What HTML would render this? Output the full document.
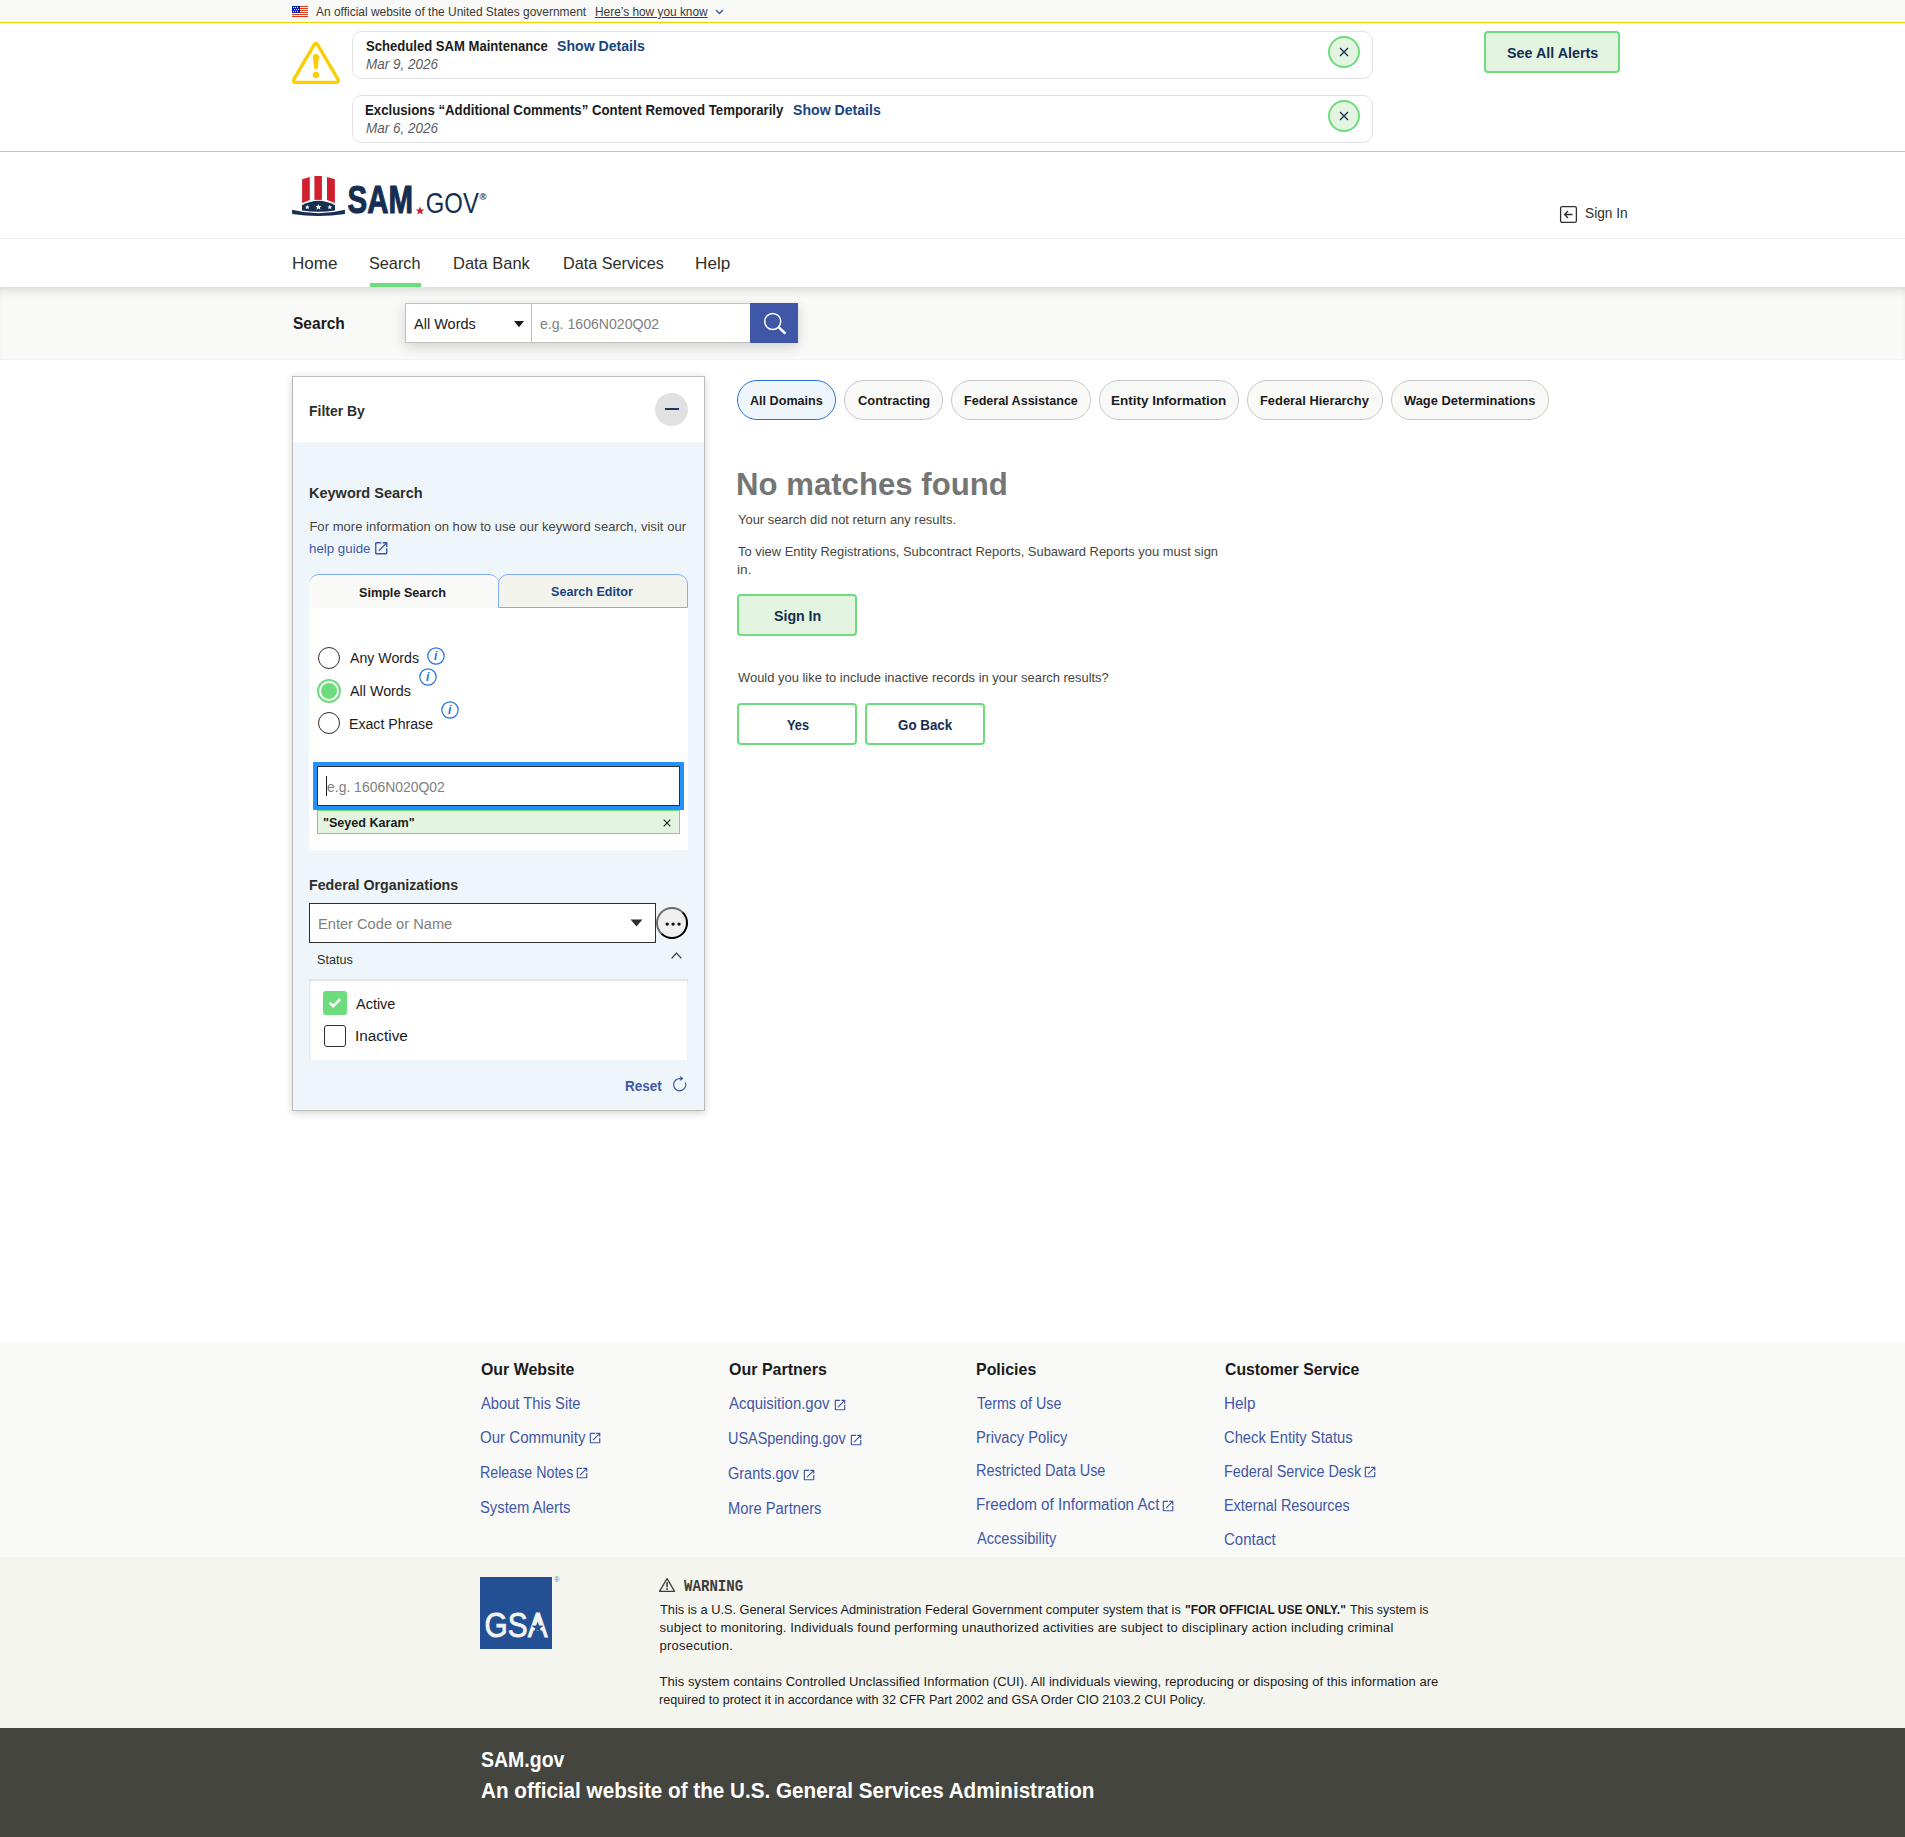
<!DOCTYPE html>
<html lang="en"><head><meta charset="utf-8"><title>SAM.gov | Search</title>
<style>
html,body{margin:0;padding:0;background:#fff;}
body{width:1905px;height:1837px;overflow:hidden;font-family:"Liberation Sans",sans-serif;color:#1b1b1b;}
#page{position:relative;width:1905px;height:1837px;overflow:hidden;}
.a{position:absolute;box-sizing:border-box;}
.t{position:absolute;white-space:pre;line-height:1;transform-origin:0 0;}
svg{position:absolute;overflow:visible;}
.pl{top:380px;height:40px;border:1px solid #c9c9c9;border-radius:20px;background:#f9f9f7;}
.btn{width:120px;height:42px;border:2px solid #6cdc7c;border-radius:4px;background:#fff;}
.ex{width:11.5px;height:11.5px;}

</style></head>
<body>
<div id="page">
<!-- gov banner -->
<div class="a" style="left:0;top:0;width:1905px;height:22px;background:#f9f9f7"></div>
<svg style="left:292px;top:6px" width="16" height="11" viewBox="0 0 16 11" shape-rendering="crispEdges"><rect width="16" height="11" fill="#fff"/><g fill="#dc3a1b"><rect y="0" width="16" height="1"/><rect y="2" width="16" height="1"/><rect y="4" width="16" height="1"/><rect y="6" width="16" height="1"/><rect y="8" width="16" height="1"/><rect y="10" width="16" height="1"/></g><rect width="8" height="7" fill="#0a1fae"/><g fill="#fff"><rect x="1" y="1" width="1" height="1"/><rect x="3" y="1" width="1" height="1"/><rect x="5" y="1" width="1" height="1"/><rect x="2" y="3" width="1" height="1"/><rect x="4" y="3" width="1" height="1"/><rect x="6" y="3" width="1" height="1"/><rect x="1" y="5" width="1" height="1"/><rect x="3" y="5" width="1" height="1"/><rect x="5" y="5" width="1" height="1"/></g></svg>
<svg style="left:715px;top:9px" width="9" height="6" viewBox="0 0 9 6"><path d="M1 1l3.5 3.5L8 1" fill="none" stroke="#3f57a6" stroke-width="1.4"/></svg>
<div class="a" style="left:0;top:22px;width:1905px;height:1px;background:#face00"></div>
<div class="a" style="left:0;top:151px;width:1905px;height:1px;background:#face00"></div>
<!-- alerts -->
<svg style="left:291px;top:41px" width="50" height="44" viewBox="0 0 50 44"><path d="M23.35 3.34A1.80 1.80 0 0 1 26.45 3.34L47.11 38.64A1.80 1.80 0 0 1 45.56 41.35L4.24 41.35A1.80 1.80 0 0 1 2.69 38.64Z" fill="none" stroke="#face00" stroke-width="3.3"/><path d="M21.75 16.1A3.15 3.15 0 0 1 28.05 16.1L26.7 26.4A1.8 1.8 0 0 1 23.1 26.4Z" fill="#face00"/><circle cx="24.9" cy="33.9" r="3.15" fill="#face00"/></svg>
<div class="a" style="left:352px;top:31px;width:1021px;height:48px;border:1px solid #dfe1e2;border-radius:10px;background:#fff"></div>
<div class="a" style="left:352px;top:95px;width:1021px;height:48px;border:1px solid #dfe1e2;border-radius:10px;background:#fff"></div>
<div class="a" style="left:1328px;top:36px;width:32px;height:32px;border:2px solid #6cdc7c;border-radius:50%;background:#e3f5e1"></div>
<div class="a" style="left:1328px;top:100px;width:32px;height:32px;border:2px solid #6cdc7c;border-radius:50%;background:#e3f5e1"></div>
<svg style="left:1339px;top:47px" width="10" height="10" viewBox="0 0 10 10"><path d="M1 1l8 8M9 1l-8 8" stroke="#162e51" stroke-width="1.3"/></svg>
<svg style="left:1339px;top:111px" width="10" height="10" viewBox="0 0 10 10"><path d="M1 1l8 8M9 1l-8 8" stroke="#162e51" stroke-width="1.3"/></svg>
<div class="a" style="left:1484px;top:31px;width:136px;height:42px;border:2px solid #6cdc7c;border-radius:4px;background:#e3f5e1"></div>
<!-- header -->
<svg style="left:292px;top:174px" width="200" height="44" viewBox="292 174 200 44">
<g fill="#d0202e"><path d="M302.1 179.3L309.8 176.9V200.1L302.1 203Z"/><path d="M314.4 176H321.9V199.9H314.4Z"/><path d="M327 176.9L334.9 179.3V203L327 200.1Z"/></g>
<path d="M302 210.5V205.3Q318.5 196.3 335 205.3V210.5Q318.5 212.9 302 210.5Z" fill="#162e51"/>
<path d="M292.1 209.8Q318.5 216.8 344.9 209.8V214Q318.5 217.9 292.1 214Z" fill="#162e51"/>
<g fill="#fff"><path d="M0 -2.2 L.65 -.7 2.1 -.7 .95 .3 1.35 1.8 0 .9 -1.35 1.8 -.95 .3 -2.1 -.7 -.65 -.7Z" transform="translate(307.3 207.2) scale(1.15)"/><path d="M0 -2.2 L.65 -.7 2.1 -.7 .95 .3 1.35 1.8 0 .9 -1.35 1.8 -.95 .3 -2.1 -.7 -.65 -.7Z" transform="translate(318.4 207.1) scale(1.45)"/><path d="M0 -2.2 L.65 -.7 2.1 -.7 .95 .3 1.35 1.8 0 .9 -1.35 1.8 -.95 .3 -2.1 -.7 -.65 -.7Z" transform="translate(329.8 207.2) scale(1.15)"/></g>
<text x="347.6" y="212.7" font-family="Liberation Sans, sans-serif" font-weight="700" font-size="38" fill="#162e51" stroke="#162e51" stroke-width="1.1" stroke-linejoin="round" textLength="65.4" lengthAdjust="spacingAndGlyphs">SAM</text>
<path d="M0 -4.4 L1.3 -1.4 4.2 -1.4 1.9 .6 2.7 3.6 0 1.8 -2.7 3.6 -1.9 .6 -4.2 -1.4 -1.3 -1.4Z" transform="translate(420 211)" fill="#d0202e"/>
<text x="425.8" y="212.7" font-family="Liberation Sans, sans-serif" font-size="29" fill="#162e51" textLength="53" lengthAdjust="spacingAndGlyphs">GOV</text>
<text x="479.6" y="200.3" font-family="Liberation Sans, sans-serif" font-weight="700" font-size="9.5" fill="#162e51">®</text>
</svg>
<svg style="left:1559px;top:205px" width="19" height="19" viewBox="0 0 19 19"><rect x="1.6" y="1.6" width="15.8" height="15.8" rx="1.6" fill="none" stroke="#2e2e2a" stroke-width="1.3"/><path d="M13.5 9.5H5.8M9 6L5.6 9.5 9 13" fill="none" stroke="#2e2e2a" stroke-width="1.3"/></svg>
<div class="a" style="left:0;top:238px;width:1905px;height:1px;background:#f0f0ec"></div>
<!-- search band -->
<div class="a" style="left:0;top:287px;width:1905px;height:73px;background:#f9f9f7;box-shadow:inset 0 7px 8px -4px rgba(0,0,0,.14);border-bottom:1px solid #f3f3ef"></div>
<div class="a" style="left:370px;top:283px;width:51px;height:4px;background:#6cdc7c"></div>
<div class="a" style="left:405px;top:303px;width:393px;height:40px;box-shadow:0 4px 12px rgba(0,0,0,.16);background:#fff"></div>
<div class="a" style="left:405px;top:303px;width:127px;height:40px;border:1px solid #c2c2be;background:#fff"></div>
<div class="a" style="left:531px;top:303px;width:220px;height:40px;border:1px solid #c2c2be;background:#fff"></div>
<svg style="left:513px;top:320px" width="12" height="8" viewBox="0 0 12 8"><path d="M1 1h10L6 7.2Z" fill="#1b1b1b"/></svg>
<div class="a" style="left:750px;top:303px;width:48px;height:40px;background:#3f57a6"></div>
<svg style="left:762px;top:311px" width="24" height="24" viewBox="0 0 24 24"><circle cx="10.7" cy="10.5" r="8" fill="none" stroke="#fff" stroke-width="1.5"/><path d="M16.8 16.4L22.8 22" stroke="#fff" stroke-width="2.4" stroke-linecap="round"/></svg>
<!-- filter panel -->
<div class="a" style="left:292px;top:376px;width:413px;height:735px;border:1px solid #bbbbb8;background:#eff6fb;box-shadow:0 2px 8px rgba(0,0,0,.18)"></div>
<div class="a" style="left:293px;top:377px;width:411px;height:65px;background:#fff"></div>
<div class="a" style="left:655px;top:393px;width:33px;height:33px;border-radius:50%;background:#e1e1e1"></div>
<div class="a" style="left:665px;top:408.4px;width:14px;height:1.4px;background:#1a3a6e"></div>
<!-- tabs -->
<div class="a" style="left:309px;top:607px;width:379px;height:243px;background:#fff"></div>
<div class="a" style="left:309px;top:574px;width:190px;height:34px;background:#f9f9f7;border-top:1px solid #81aefc;border-radius:10px 10px 0 0"></div>
<div class="a" style="left:498px;top:574px;width:190px;height:34px;background:#f3f3ee;border:1px solid #81aefc;border-radius:10px 10px 0 0"></div>
<!-- radios -->
<div class="a" style="left:318px;top:647px;width:22px;height:22px;border:1.6px solid #2e2e2a;border-radius:50%;background:#fff"></div>
<div class="a" style="left:317px;top:679px;width:24px;height:24px;border:2px solid #6cdc7c;border-radius:50%;background:#fff"></div>
<div class="a" style="left:321px;top:683px;width:16px;height:16px;border-radius:50%;background:#6cdc7c"></div>
<div class="a" style="left:318px;top:712px;width:22px;height:22px;border:1.6px solid #2e2e2a;border-radius:50%;background:#fff"></div>
<!-- info icons -->
<svg style="left:427px;top:647px" width="18" height="18" viewBox="0 0 18 18"><circle cx="9" cy="9" r="8.2" fill="none" stroke="#2672de" stroke-width="1.2"/><text x="8.6" y="13.4" text-anchor="middle" font-family="Liberation Sans, sans-serif" font-style="italic" font-weight="700" font-size="12" fill="#2672de">i</text></svg>
<svg style="left:419px;top:668px" width="18" height="18" viewBox="0 0 18 18"><circle cx="9" cy="9" r="8.2" fill="none" stroke="#2672de" stroke-width="1.2"/><text x="8.6" y="13.4" text-anchor="middle" font-family="Liberation Sans, sans-serif" font-style="italic" font-weight="700" font-size="12" fill="#2672de">i</text></svg>
<svg style="left:441px;top:701px" width="18" height="18" viewBox="0 0 18 18"><circle cx="9" cy="9" r="8.2" fill="none" stroke="#2672de" stroke-width="1.2"/><text x="8.6" y="13.4" text-anchor="middle" font-family="Liberation Sans, sans-serif" font-style="italic" font-weight="700" font-size="12" fill="#2672de">i</text></svg>
<!-- keyword input -->
<div class="a" style="left:313px;top:762px;width:371px;height:48px;background:#2491ff"></div>
<div class="a" style="left:317px;top:766px;width:363px;height:40px;border:1px solid #2e2e2a;background:#fff"></div>
<div class="a" style="left:326px;top:776px;width:1px;height:20px;background:#1b1b1b"></div>
<div class="a" style="left:317px;top:810px;width:363px;height:24px;border:1px solid #6cdc7c;background:#e3f5e1"></div>
<svg style="left:663px;top:819px" width="8" height="8" viewBox="0 0 8 8"><path d="M.7 .7l6.6 6.6M7.3 .7l-6.6 6.6" stroke="#1b1b1b" stroke-width="1.1"/></svg>
<!-- federal org -->
<div class="a" style="left:309px;top:903px;width:347px;height:40px;border:1px solid #2e2e2a;background:#fff"></div>
<svg style="left:629.5px;top:919px" width="13" height="8" viewBox="0 0 13 8"><path d="M.6 .4h11.8L6.5 7.6Z" fill="#2e2e2a"/></svg>
<div class="a" style="left:656px;top:907px;width:32px;height:32px;border:2px solid #000;border-top-color:#6a6a6a;border-left-color:#6a6a6a;border-radius:50%;background:#efefef"></div>
<svg style="left:664px;top:921px" width="18" height="6" viewBox="0 0 18 6"><circle cx="3.2" cy="3.1" r="1.7" fill="#111"/><circle cx="9.1" cy="3.1" r="1.7" fill="#111"/><circle cx="15" cy="3.1" r="1.7" fill="#111"/></svg>
<svg style="left:671px;top:952px" width="11" height="7" viewBox="0 0 11 7"><path d="M.6 6.3L5.5 1.2 10.4 6.3" fill="none" stroke="#2e2e2a" stroke-width="1.2"/></svg>
<!-- status box -->
<div class="a" style="left:309px;top:979px;width:379px;height:81px;background:#fff;box-shadow:inset 1px 2px 2px rgba(0,0,0,.12), inset -1px 0 1px rgba(0,0,0,.06)"></div>
<div class="a" style="left:323px;top:991px;width:24px;height:24px;border-radius:3px;background:#6cdc7c"></div>
<svg style="left:328px;top:997px" width="14" height="12" viewBox="0 0 14 12"><path d="M1.6 5.6L5.2 9.2 12.2 2.2" fill="none" stroke="#fff" stroke-width="2.6"/></svg>
<div class="a" style="left:324px;top:1025px;width:22px;height:22px;border:1.6px solid #2e2e2a;border-radius:3px;background:#fff"></div>
<svg style="left:670px;top:1074px" width="20" height="20" viewBox="670 1074 20 20"><path d="M680.76 1078.69A6.1 6.1 0 1 0 685.36 1082.41" fill="none" stroke="#3f57a6" stroke-width="1.15"/><path d="M680.1 1076L683.4 1078.5 680.4 1081Z" fill="#3f57a6"/></svg>
<!-- pills -->
<div class="a" style="left:737px;top:380px;width:99px;height:40px;border:1px solid #2672de;border-radius:20px;background:#eff6fb"></div>
<div class="a pl" style="left:844px;width:99px"></div>
<div class="a pl" style="left:951px;width:140px"></div>
<div class="a pl" style="left:1099px;width:140px"></div>
<div class="a pl" style="left:1247px;width:136px"></div>
<div class="a pl" style="left:1391px;width:158px"></div>
<!-- buttons -->
<div class="a btn" style="left:737px;top:594px;background:#e3f5e1"></div>
<div class="a btn" style="left:737px;top:703px"></div>
<div class="a btn" style="left:865px;top:703px"></div>
<!-- footer -->
<div class="a" style="left:0;top:1343px;width:1905px;height:214px;background:#f9f9f7"></div>
<div class="a" style="left:0;top:1557px;width:1905px;height:171px;background:#f5f5f0"></div>
<div class="a" style="left:0;top:1728px;width:1905px;height:109px;background:#454540"></div>
<svg width="0" height="0" style="left:0;top:0"><defs><path id="exi" fill="#3f57a6" d="M19 19H5V5h7V3H5c-1.11 0-2 .9-2 2v14c0 1.1.89 2 2 2h14c1.1 0 2-.9 2-2v-7h-2v7zM14 3v2h3.59l-9.830 9.830 1.410 1.410L19 6.410V10h2V3h-7z"/></defs></svg>
<svg class="a" style="left:372.5px;top:540.2px" width="16.5" height="16.5" viewBox="0 0 24 24"><use href="#exi"/></svg>
<svg class="a" style="left:588.4px;top:1431.2px" width="14.1" height="14.1" viewBox="0 0 24 24"><use href="#exi"/></svg>
<svg class="a" style="left:575.0px;top:1466.2px" width="14.1" height="14.1" viewBox="0 0 24 24"><use href="#exi"/></svg>
<svg class="a" style="left:832.5px;top:1397.8px" width="14.1" height="14.1" viewBox="0 0 24 24"><use href="#exi"/></svg>
<svg class="a" style="left:848.9px;top:1432.8px" width="14.1" height="14.1" viewBox="0 0 24 24"><use href="#exi"/></svg>
<svg class="a" style="left:801.6px;top:1467.8px" width="14.1" height="14.1" viewBox="0 0 24 24"><use href="#exi"/></svg>
<svg class="a" style="left:1161.2px;top:1498.8px" width="14.1" height="14.1" viewBox="0 0 24 24"><use href="#exi"/></svg>
<svg class="a" style="left:1363.2px;top:1465.4px" width="14.1" height="14.1" viewBox="0 0 24 24"><use href="#exi"/></svg>
<!-- GSA -->
<div class="a" style="left:480px;top:1577px;width:72px;height:72px;background:#235094"></div>
<svg style="left:480px;top:1577px" width="84" height="72" viewBox="480 1577 84 72"><text x="484.6" y="1637" font-family="Liberation Sans, sans-serif" font-size="35" fill="#f5f5f0" stroke="#f5f5f0" stroke-width=".8" textLength="63" lengthAdjust="spacingAndGlyphs">GSA</text><path d="M537.7 1615.5L533 1629.5H542.4Z" fill="#f5f5f0"/><path d="M537.6 1621.4L539.1 1625.6L543.5 1625.7L540.0 1628.4L541.2 1632.6L537.6 1630.1L534.0 1632.6L535.2 1628.4L531.7 1625.7L536.1 1625.6Z" fill="#235094"/><text x="554.3" y="1582.3" font-family="Liberation Sans, sans-serif" font-size="7" fill="#5a78ad">®</text></svg>
<svg style="left:657px;top:1576px" width="20" height="18" viewBox="657 1576 20 18"><path d="M667.05 1578.7L674.6 1591.3H659.5Z" fill="none" stroke="#3d3d3a" stroke-width="1.3" stroke-linejoin="round"/><path d="M667.05 1582.3V1587.2" stroke="#3d3d3a" stroke-width="1.6"/><circle cx="667.05" cy="1589" r=".95" fill="#3d3d3a"/></svg>

<span class="t" style="left:316.00px;top:5.00px;font-size:13px;transform:scaleX(0.9194);color:#3a3a36;">An official website of the United States government</span>
<span class="t" style="left:595.00px;top:5.00px;font-size:13px;transform:scaleX(0.9131);color:#3a3a36;text-decoration:underline;text-underline-offset:1px;">Here’s how you know</span>
<span class="t" style="left:366.40px;top:37.70px;font-size:15px;transform:scaleX(0.8725);font-weight:700;">Scheduled SAM Maintenance</span>
<span class="t" style="left:557.40px;top:37.70px;font-size:15px;transform:scaleX(0.9405);font-weight:700;color:#1a4480;">Show Details</span>
<span class="t" style="left:366.40px;top:55.90px;font-size:15px;transform:scaleX(0.8996);color:#5c5c5c;font-style:italic;">Mar 9, 2026</span>
<span class="t" style="left:365.40px;top:102.30px;font-size:15px;transform:scaleX(0.8812);font-weight:700;">Exclusions “Additional Comments” Content Removed Temporarily</span>
<span class="t" style="left:792.60px;top:102.30px;font-size:15px;transform:scaleX(0.9405);font-weight:700;color:#1a4480;">Show Details</span>
<span class="t" style="left:366.40px;top:119.90px;font-size:15px;transform:scaleX(0.8996);color:#5c5c5c;font-style:italic;">Mar 6, 2026</span>
<span class="t" style="left:1506.60px;top:44.90px;font-size:15px;transform:scaleX(0.9540);font-weight:700;color:#162e51;">See All Alerts</span>
<span class="t" style="left:1585.00px;top:205.00px;font-size:15px;transform:scaleX(0.9142);color:#2e2e2a;">Sign In</span>
<span class="t" style="left:291.60px;top:255.21px;font-size:17px;transform:scaleX(1.0062);color:#2e2e2a;">Home</span>
<span class="t" style="left:369.00px;top:255.21px;font-size:17px;transform:scaleX(0.9552);color:#2e2e2a;">Search</span>
<span class="t" style="left:453.00px;top:255.21px;font-size:17px;transform:scaleX(0.9678);color:#2e2e2a;">Data Bank</span>
<span class="t" style="left:563.00px;top:255.21px;font-size:17px;transform:scaleX(0.9527);color:#2e2e2a;">Data Services</span>
<span class="t" style="left:695.00px;top:255.21px;font-size:17px;transform:scaleX(1.0092);color:#2e2e2a;">Help</span>
<span class="t" style="left:292.60px;top:315.01px;font-size:17px;transform:scaleX(0.9137);font-weight:700;">Search</span>
<span class="t" style="left:414.00px;top:316.28px;font-size:15.5px;transform:scaleX(0.9358);">All Words</span>
<span class="t" style="left:540.00px;top:316.28px;font-size:15.5px;transform:scaleX(0.9100);color:#808080;">e.g. 1606N020Q02</span>
<span class="t" style="left:309.40px;top:403.30px;font-size:15px;transform:scaleX(0.9302);font-weight:700;color:#2e2e2a;">Filter By</span>
<span class="t" style="left:309.40px;top:485.30px;font-size:15px;transform:scaleX(0.9666);font-weight:700;color:#2e2e2a;">Keyword Search</span>
<span class="t" style="left:309.40px;top:520.00px;font-size:13px;letter-spacing:0.037px;color:#454540;">For more information on how to use our keyword search, visit our</span>
<span class="t" style="left:309.40px;top:542.00px;font-size:13px;transform:scaleX(1.0239);color:#3f57a6;">help guide</span>
<span class="t" style="left:359.00px;top:585.70px;font-size:13px;transform:scaleX(0.9713);font-weight:700;">Simple Search</span>
<span class="t" style="left:551.00px;top:585.00px;font-size:13px;transform:scaleX(0.9678);font-weight:700;color:#1a4480;">Search Editor</span>
<span class="t" style="left:350.30px;top:649.58px;font-size:15.5px;transform:scaleX(0.9135);">Any Words</span>
<span class="t" style="left:350.30px;top:682.58px;font-size:15.5px;transform:scaleX(0.9236);">All Words</span>
<span class="t" style="left:349.30px;top:715.58px;font-size:15.5px;transform:scaleX(0.9113);">Exact Phrase</span>
<span class="t" style="left:326.50px;top:779.18px;font-size:15.5px;transform:scaleX(0.8993);color:#808080;">e.g. 1606N020Q02</span>
<span class="t" style="left:322.70px;top:815.70px;font-size:13px;transform:scaleX(0.9675);font-weight:700;">"Seyed Karam"</span>
<span class="t" style="left:309.40px;top:877.30px;font-size:15px;transform:scaleX(0.9471);font-weight:700;color:#2e2e2a;">Federal Organizations</span>
<span class="t" style="left:318.30px;top:915.58px;font-size:15.5px;transform:scaleX(0.9442);color:#808080;">Enter Code or Name</span>
<span class="t" style="left:316.70px;top:954.12px;font-size:12.5px;transform:scaleX(1.0065);color:#2e2e2a;">Status</span>
<span class="t" style="left:356.30px;top:995.58px;font-size:15.5px;transform:scaleX(0.9336);">Active</span>
<span class="t" style="left:355.30px;top:1027.58px;font-size:15.5px;transform:scaleX(0.9892);">Inactive</span>
<span class="t" style="left:624.90px;top:1079.33px;font-size:14.5px;transform:scaleX(0.9328);font-weight:700;color:#3f57a6;">Reset</span>
<span class="t" style="left:750.00px;top:394.17px;font-size:13.5px;transform:scaleX(0.9332);font-weight:700;">All Domains</span>
<span class="t" style="left:857.60px;top:394.17px;font-size:13.5px;transform:scaleX(0.9533);font-weight:700;">Contracting</span>
<span class="t" style="left:964.40px;top:394.17px;font-size:13.5px;transform:scaleX(0.9287);font-weight:700;">Federal Assistance</span>
<span class="t" style="left:1110.60px;top:394.17px;font-size:13.5px;transform:scaleX(0.9976);font-weight:700;">Entity Information</span>
<span class="t" style="left:1259.50px;top:394.17px;font-size:13.5px;transform:scaleX(0.9540);font-weight:700;">Federal Hierarchy</span>
<span class="t" style="left:1403.70px;top:394.17px;font-size:13.5px;transform:scaleX(0.9554);font-weight:700;">Wage Determinations</span>
<span class="t" style="left:736.00px;top:467.51px;font-size:32px;transform:scaleX(0.9739);font-weight:700;color:#757575;">No matches found</span>
<span class="t" style="left:738.40px;top:512.60px;font-size:13px;transform:scaleX(0.9945);color:#454540;">Your search did not return any results.</span>
<span class="t" style="left:737.60px;top:545.00px;font-size:13px;transform:scaleX(0.9930);color:#454540;">To view Entity Registrations, Subcontract Reports, Subaward Reports you must sign</span>
<span class="t" style="left:736.60px;top:562.60px;font-size:13px;transform:scaleX(1.0534);color:#454540;">in.</span>
<span class="t" style="left:773.60px;top:607.70px;font-size:15px;transform:scaleX(0.9443);font-weight:700;color:#162e51;">Sign In</span>
<span class="t" style="left:737.60px;top:671.40px;font-size:13px;transform:scaleX(0.9951);color:#454540;">Would you like to include inactive records in your search results?</span>
<span class="t" style="left:787.40px;top:716.70px;font-size:15px;transform:scaleX(0.8516);font-weight:700;color:#162e51;">Yes</span>
<span class="t" style="left:897.60px;top:716.70px;font-size:15px;transform:scaleX(0.8907);font-weight:700;color:#162e51;">Go Back</span>
<span class="t" style="left:481.40px;top:1360.63px;font-size:16.5px;transform:scaleX(0.9640);font-weight:700;">Our Website</span>
<span class="t" style="left:729.40px;top:1360.63px;font-size:16.5px;transform:scaleX(0.9696);font-weight:700;">Our Partners</span>
<span class="t" style="left:976.40px;top:1360.63px;font-size:16.5px;transform:scaleX(0.9660);font-weight:700;">Policies</span>
<span class="t" style="left:1225.40px;top:1360.63px;font-size:16.5px;transform:scaleX(0.9578);font-weight:700;">Customer Service</span>
<span class="t" style="left:481.40px;top:1396.06px;font-size:16px;transform:scaleX(0.9186);color:#3f57a6;">About This Site</span>
<span class="t" style="left:480.40px;top:1430.46px;font-size:16px;transform:scaleX(0.9409);color:#3f57a6;">Our Community</span>
<span class="t" style="left:480.40px;top:1465.06px;font-size:16px;transform:scaleX(0.8901);color:#3f57a6;">Release Notes</span>
<span class="t" style="left:480.40px;top:1499.86px;font-size:16px;transform:scaleX(0.9244);color:#3f57a6;">System Alerts</span>
<span class="t" style="left:729.40px;top:1396.46px;font-size:16px;transform:scaleX(0.9329);color:#3f57a6;">Acquisition.gov</span>
<span class="t" style="left:728.40px;top:1431.46px;font-size:16px;transform:scaleX(0.9010);color:#3f57a6;">USASpending.gov</span>
<span class="t" style="left:728.40px;top:1466.46px;font-size:16px;transform:scaleX(0.9049);color:#3f57a6;">Grants.gov</span>
<span class="t" style="left:728.40px;top:1501.46px;font-size:16px;transform:scaleX(0.9215);color:#3f57a6;">More Partners</span>
<span class="t" style="left:977.40px;top:1396.46px;font-size:16px;transform:scaleX(0.8956);color:#3f57a6;">Terms of Use</span>
<span class="t" style="left:976.40px;top:1430.46px;font-size:16px;transform:scaleX(0.9179);color:#3f57a6;">Privacy Policy</span>
<span class="t" style="left:976.40px;top:1463.46px;font-size:16px;transform:scaleX(0.9039);color:#3f57a6;">Restricted Data Use</span>
<span class="t" style="left:976.40px;top:1497.46px;font-size:16px;transform:scaleX(0.9504);color:#3f57a6;">Freedom of Information Act</span>
<span class="t" style="left:977.40px;top:1531.46px;font-size:16px;transform:scaleX(0.9112);color:#3f57a6;">Accessibility</span>
<span class="t" style="left:1224.40px;top:1396.46px;font-size:16px;transform:scaleX(0.9563);color:#3f57a6;">Help</span>
<span class="t" style="left:1224.40px;top:1430.46px;font-size:16px;transform:scaleX(0.9212);color:#3f57a6;">Check Entity Status</span>
<span class="t" style="left:1224.40px;top:1464.46px;font-size:16px;transform:scaleX(0.8971);color:#3f57a6;">Federal Service Desk</span>
<span class="t" style="left:1224.40px;top:1498.46px;font-size:16px;transform:scaleX(0.9011);color:#3f57a6;">External Resources</span>
<span class="t" style="left:1224.40px;top:1532.46px;font-size:16px;transform:scaleX(0.9362);color:#3f57a6;">Contact</span>
<span class="t" style="left:683.60px;top:1579.18px;font-size:16.2px;transform:scaleX(0.8708);font-weight:700;color:#3d3d3a;font-family:'Liberation Mono', monospace;">WARNING</span>
<span class="t" style="left:659.60px;top:1603.00px;font-size:13px;transform:scaleX(0.9834);">This is a U.S. General Services Administration Federal Government computer system that is</span>
<span class="t" style="left:1185.00px;top:1603.00px;font-size:13px;transform:scaleX(0.9236);font-weight:700;">"FOR OFFICIAL USE ONLY."</span>
<span class="t" style="left:1350.00px;top:1603.00px;font-size:13px;transform:scaleX(0.9523);">This system is</span>
<span class="t" style="left:659.60px;top:1621.00px;font-size:13px;letter-spacing:0.155px;">subject to monitoring. Individuals found performing unauthorized activities are subject to disciplinary action including criminal</span>
<span class="t" style="left:659.60px;top:1639.00px;font-size:13px;letter-spacing:0.216px;">prosecution.</span>
<span class="t" style="left:659.60px;top:1675.00px;font-size:13px;letter-spacing:0.052px;">This system contains Controlled Unclassified Information (CUI). All individuals viewing, reproducing or disposing of this information are</span>
<span class="t" style="left:658.60px;top:1693.00px;font-size:13px;transform:scaleX(0.9678);">required to protect it in accordance with 32 CFR Part 2002 and GSA Order CIO 2103.2 CUI Policy.</span>
<span class="t" style="left:480.70px;top:1749.08px;font-size:22px;transform:scaleX(0.8861);font-weight:700;color:#ffffff;">SAM.gov</span>
<span class="t" style="left:480.70px;top:1779.88px;font-size:22px;transform:scaleX(0.9390);font-weight:700;color:#ffffff;">An official website of the U.S. General Services Administration</span>
</div>
</body></html>
